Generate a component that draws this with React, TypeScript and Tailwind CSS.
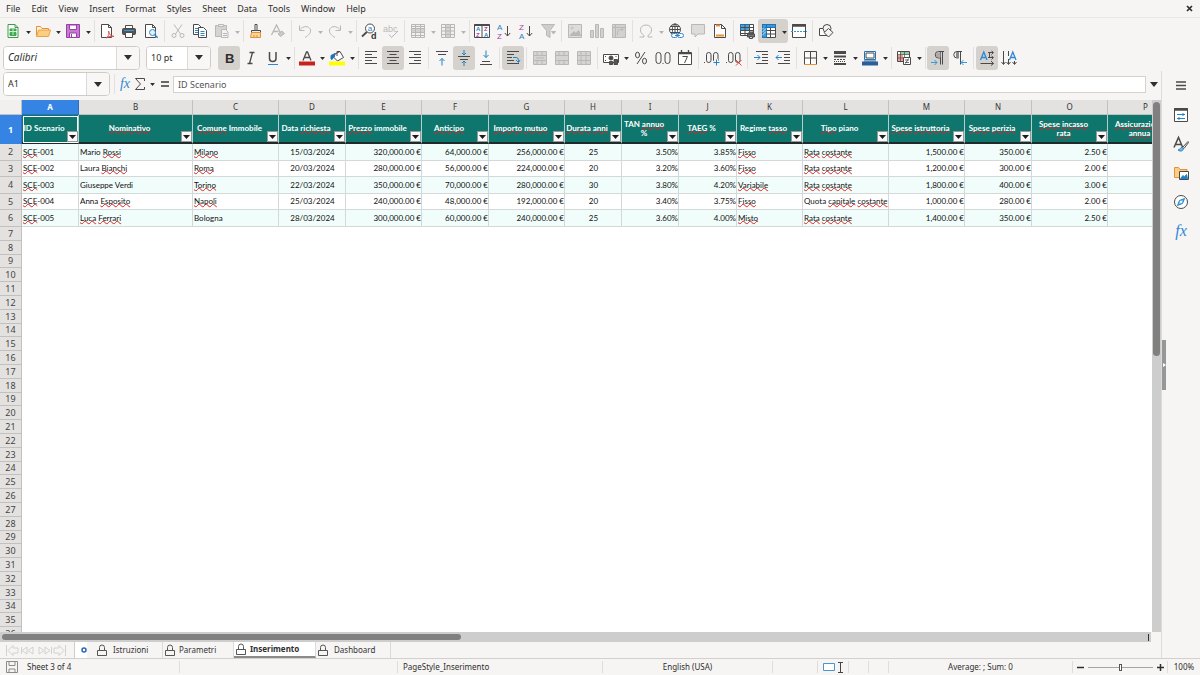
import React from 'react';

type IconProps = { children: React.ReactNode; off?: boolean };

const Icon: React.FC<IconProps> = ({ children, off }) => (
  <svg
    viewBox="0 0 16 16"
    fill="none"
    stroke={off ? '#b9b8b6' : '#4a4a4a'}
    className="h-4 w-4 shrink-0 overflow-visible font-['Liberation_Sans',sans-serif]"
    aria-hidden="true"
  >
    {children}
  </svg>
);

const Triangle: React.FC<{ off?: boolean; big?: boolean }> = ({ off, big }) => (
  <svg viewBox="0 0 8 5" className={big ? 'h-[5px] w-2' : 'h-[3px] w-[5px]'} aria-hidden="true">
    <path d="M0 0h8L4 5z" fill={off ? '#b5b4b2' : '#2e2e2e'} />
  </svg>
);

const Sep: React.FC<{ tight?: boolean }> = ({ tight }) => (
  <div className={`flex h-[22px] shrink-0 justify-center ${tight ? 'w-1' : 'w-[5px]'}`}>
    <div className="w-px bg-[#e3e1df]" />
  </div>
);

type ToolProps = { label: string; children: React.ReactNode; off?: boolean; on?: boolean; menu?: boolean };

const Tool: React.FC<ToolProps> = ({ label, children, off, on, menu }) => (
  <div className={`flex shrink-0 rounded-[3px] ${on ? 'bg-[#d5d1cd]' : ''}`}>
    <button type="button" aria-label={label} disabled={off} className="flex h-6 w-[22px] items-center justify-center">
      <Icon off={off}>{children}</Icon>
    </button>
    {menu && (
      <button type="button" aria-label={`${label} options`} disabled={off} className="flex h-6 w-2 items-center justify-center pt-0.5">
        <Triangle off={off} />
      </button>
    )}
  </div>
);

const Combo: React.FC<{ label: string; value: string; width: string; text: string }> = ({ label, value, width, text }) => (
  <div className={`flex h-6 shrink-0 overflow-hidden rounded-[4px] border border-[#cfcbc7] bg-white ${width}`}>
    <input
      aria-label={label}
      defaultValue={value}
      className={`min-w-0 flex-1 bg-white px-1 text-[#2e2e2e] outline-none ${text}`}
    />
    <button type="button" aria-label={`${label} list`} className="flex w-[23px] items-center justify-center border-l border-[#dcd9d6] bg-[#f8f7f6]">
      <Triangle big />
    </button>
  </div>
);

const menus = ['File', 'Edit', 'View', 'Insert', 'Format', 'Styles', 'Sheet', 'Data', 'Tools', 'Window', 'Help'];

const MenuBar = () => (
  <div className="flex h-[17px] items-center justify-between pr-[7px] pl-1.5">
    <nav className="flex gap-[11px] text-[9px] text-[#2e2e2e]">
      {menus.map((m) => (
        <button type="button" key={m}>{m}</button>
      ))}
    </nav>
    <button type="button" aria-label="Close document">
      <svg viewBox="0 0 7 7" className="h-[7px] w-[7px]" stroke="#2e2e2e" strokeWidth="1.7">
        <path d="M1 1l5 5M6 1L1 6" />
      </svg>
    </button>
  </div>
);

const StandardBar = () => (
  <div className="flex h-[27px] items-center border-t border-[#eae8e6] pl-0.5">
    <Tool label="New" menu>
      <path d="M3 1.500h7l3 3v10H3z" stroke="#3f9a4d" fill="#fff" />
      <path d="M10 1.500v3h3" stroke="#3f9a4d" />
      <path d="M5 6h6v2H5zM5 9.500h6v3H5z" fill="#3faa50" stroke="#3faa50" />
      <path d="M5 8.500h6M8 6v6" stroke="#c9efcf" />
    </Tool>
    <Tool label="Open" menu>
      <path d="M1.500 13V3.500h4l1.500 2h6.500V7" stroke="#e2903a" fill="#fff3dc" />
      <path d="M1.500 13.500l2-6.500h12l-2 6.500z" fill="#fbcf82" stroke="#e9a24a" />
    </Tool>
    <Tool label="Save" menu>
      <path d="M1.500 1.500h13v13h-13z" fill="#c67bd0" stroke="#9a3fa8" />
      <path d="M4.500 2h7v4.500h-7z" fill="#fff" stroke="#9a3fa8" />
      <path d="M4.500 14.500V10h7v4.500z" fill="#fff" stroke="#9a3fa8" />
      <path d="M6.500 11v3" stroke="#9a3fa8" />
    </Tool>
    <Sep tight />
    <Tool label="Export as PDF">
      <path d="M2.500 1.500h7l3 3v10h-10z" fill="#fff" />
      <path d="M9.500 1.500v3h3" />
      <path d="M7 15c3-2 3.500-5 2.500-7 0 3 2 5 5.500 5.500-3-.5-5.500 0-8 1.500z" stroke="#dc4b4b" />
    </Tool>
    <Tool label="Print">
      <path d="M4.500 5V2.500h7V5" fill="#fff" />
      <rect x="1.500" y="5.500" width="13" height="6" rx="1" fill="#555" />
      <path d="M3 7.500h10" stroke="#2e9bd6" />
      <path d="M4.500 9.500h7v5h-7z" fill="#fff" />
    </Tool>
    <Tool label="Print preview">
      <path d="M2.500 1.500h7l3 3v10h-10z" fill="#fff" />
      <path d="M9.500 1.500v3h3" />
      <circle cx="9.500" cy="9.500" r="3" fill="#e3f2fb" stroke="#2f87c6" />
      <path d="M11.700 11.700l3 3" stroke="#2f87c6" strokeWidth="1.500" />
    </Tool>
    <Sep />
    <Tool label="Cut" off>
      <path d="M4 1.500l6.500 9.500M12 1.500L5.500 11" />
      <circle cx="4" cy="12.500" r="2" />
      <circle cx="12" cy="12.500" r="2" />
    </Tool>
    <Tool label="Copy">
      <path d="M1.500 1.500h5l3 3v7h-8z" fill="#fff" />
      <path d="M3 5.500h4M3 7.500h4M3 9.500h3" stroke="#2f87c6" />
      <path d="M6.500 4.500h5l3 3v7h-8z" fill="#fff" />
      <path d="M8.500 8.500h4M8.500 10.500h4M8.500 12.500h4" stroke="#2f87c6" />
    </Tool>
    <Tool label="Paste" off menu>
      <path d="M1.500 2.500h11v11h-11z" fill="#d5d4d2" />
      <path d="M4.500 1.500h5v2h-5z" fill="#eee" />
      <path d="M7.500 6.500h4l2.500 2.500v5.500H7.500z" fill="#f4f3f2" />
      <path d="M9 10.500h4M9 12.500h4" />
    </Tool>
    <Sep tight />
    <Tool label="Clone formatting">
      <path d="M7 1.500h2v6H7z" fill="#fff" />
      <path d="M3.500 7.500h9v2h-9z" fill="#eee" />
      <path d="M3.500 9.500h9v5h-10z" fill="#fbd79e" stroke="#e2903a" />
      <path d="M6 14v-2M9 14v-2" stroke="#e2903a" />
    </Tool>
    <Tool label="Clear formatting" off>
      <path d="M1.500 12L6.500 2l4 8M3.500 8.500h5" strokeWidth="1.300" />
      <path d="M8 11l4-3 2.500 2.500-4 3z" fill="#c9c8c6" />
    </Tool>
    <Sep />
    <Tool label="Undo" off menu>
      <path d="M2.500 2.500v5h5" />
      <path d="M2.500 7C6 2.500 12.500 2.500 13.500 7c.5 3-2 5.500-5.500 7.500" />
    </Tool>
    <Tool label="Redo" off menu>
      <path d="M13.500 2.500v5h-5" />
      <path d="M13.500 7C10 2.500 3.500 2.500 2.500 7c-.5 3 2 5.500 5.500 7.500" />
    </Tool>
    <Sep tight />
    <Tool label="Find and replace">
      <circle cx="9" cy="5.500" r="4.500" fill="#fff" />
      <path d="M5.800 9L1 13.500" strokeWidth="1.800" />
      <text x="6.800" y="8" fontSize="8" fill="#1e83c8" stroke="none">a</text>
      <text x="10" y="15.500" fontSize="9" fontWeight="600" fill="#333" stroke="none">d</text>
    </Tool>
    <Tool label="Spelling" off>
      <text x="0" y="8.500" fontSize="9" fill="#b9b8b6" stroke="none">abc</text>
      <path d="M6 11.500l2.500 3L15 8" />
    </Tool>
    <Sep />
    <Tool label="Row" off menu>
      <path d="M1.500 1.500h13v13h-13z" fill="#f1f0ef" />
      <path d="M1.500 5.500h13v4h-13z" fill="#d2d1cf" />
      <path d="M1.500 3.500h13M1.500 12.500h13M5.500 1.500v13M10.500 1.500v13" />
    </Tool>
    <Tool label="Column" off menu>
      <path d="M1.500 1.500h13v13h-13z" fill="#f1f0ef" />
      <path d="M5.500 1.500h5v13h-5z" fill="#d2d1cf" />
      <path d="M1.500 4.500h13M1.500 8h13M1.500 11.500h13" />
    </Tool>
    <Sep tight />
    <Tool label="Sort">
      <path d="M.5 1.500h15v13H.5zM8 3v11.500" fill="#fff" />
      <path d="M.5 2h15" strokeWidth="2" />
      <g fontSize="6" fontWeight="700" stroke="none">
        <text x="2" y="8" fill="#1e83c8">A</text>
        <text x="2" y="14" fill="#a33ea1">Z</text>
        <text x="10" y="8" fill="#a33ea1">Z</text>
        <text x="10" y="14" fill="#1e83c8">A</text>
      </g>
    </Tool>
    <Tool label="Sort ascending">
      <g fontSize="8" stroke="none">
        <text x="1" y="7" fill="#1e83c8">A</text>
        <text x="1" y="15.500" fill="#a33ea1">Z</text>
      </g>
      <path d="M11.500 3v10M8.800 10l2.700 3 2.700-3" />
    </Tool>
    <Tool label="Sort descending">
      <g fontSize="8" stroke="none">
        <text x="1" y="7" fill="#a33ea1">Z</text>
        <text x="1" y="15.500" fill="#1e83c8">A</text>
      </g>
      <path d="M11.500 3v10M8.800 10l2.700 3 2.700-3" />
    </Tool>
    <Tool label="AutoFilter" off>
      <path d="M1.500 1.500h13L10 7.500v7l-3.500-2v-5z" fill="#cfcecc" />
      <path d="M11.500 8.500h4l-2 2.500z" fill="#b9b8b6" />
    </Tool>
    <Sep />
    <Tool label="Insert image" off>
      <path d="M1.500 1.500h13v13h-13z" fill="#dddcda" />
      <path d="M3 12.500l4-4 2 2 2.500-3 2 5z" fill="#b9b8b6" />
      <circle cx="5" cy="5" r="1" fill="#fff" />
    </Tool>
    <Tool label="Insert chart" off>
      <path d="M1.500 7.500h3v7h-3zM6.500 1.500h3v13h-3zM11.500 5.500h3v9h-3z" fill="#d2d1cf" />
    </Tool>
    <Tool label="Pivot table" off>
      <path d="M1.500 1.500h13v13h-13z" fill="#d2d1cf" />
      <path d="M1.500 4.500h13M4.500 1.500v13" />
      <path d="M6.500 12v-2.500a3 3 0 013-3H12M10.500 5L12 6.500 10.500 8" />
    </Tool>
    <Sep />
    <Tool label="Special character" off menu>
      <path d="M1.500 14H6v-1.500C1 10 1 2 8 2s7 8 2 10.500V14h4.500" />
    </Tool>
    <Tool label="Hyperlink">
      <circle cx="7" cy="6.500" r="5.500" fill="#fff" />
      <path d="M1.500 6.500h11M2.500 3.500h9M2.500 9.500h9M7 1v11" />
      <ellipse cx="7" cy="6.500" rx="2.700" ry="5.500" />
      <rect x="3.500" y="10.500" width="6" height="4" rx="2" fill="#fff" stroke="#2f87d6" />
      <rect x="9.500" y="10.500" width="6" height="4" rx="2" fill="#fff" stroke="#2f87d6" />
      <path d="M7 12.500h5" stroke="#2f87d6" />
    </Tool>
    <Tool label="Comment" off>
      <path d="M1.500 1.500h13v9.500H8l-3 3v-3H1.500z" fill="#dddcda" />
    </Tool>
    <Tool label="Headers and footers">
      <path d="M2.500 1.500h7l4 4v9h-11z" fill="#fff" />
      <path d="M9.500 1.500v4h4" />
      <path d="M4 2.500h4M4 12.500h8" stroke="#e8923a" strokeWidth="2" />
    </Tool>
    <Sep />
    <Tool label="Print area">
      <path d="M1.500 1.500h13v11h-13z" fill="#fff" />
      <path d="M1.500 1.500h9v6h-9z" fill="#4ba3dd" stroke="#1d73b5" />
      <path d="M1.500 4.500h13M1.500 7.500h13M1.500 10.500h13M6 1.500v11M10.500 1.500v11" />
      <path d="M8.500 11h7v3h-7zM10 9h4v2h-4z" fill="#777" />
      <path d="M10.500 13.500h3v2h-3z" fill="#b9e0f7" />
    </Tool>
    <Tool label="Freeze rows and columns" on menu>
      <path d="M1.500 1.500h13v13h-13z" fill="#fff" />
      <path d="M1.500 1.500h13v3h-13zM1.500 1.500h4v13h-4z" fill="#3b97d8" stroke="#1d73b5" />
      <path d="M5.500 7.500h9M5.500 11h9M9.500 4.500v10" />
      <path d="M1 6.500l2-2M1 9.500l4-4M1 12.500l4-4" stroke="#c4e5fa" />
    </Tool>
    <Tool label="Split window">
      <path d="M1.500 1.500h13v13h-13z" fill="#fff" />
      <path d="M1 2.500h14" strokeWidth="2.500" />
      <path d="M0 8.500h16" stroke="#2f9bd6" strokeDasharray="2 1" />
    </Tool>
    <Sep />
    <Tool label="Draw functions">
      <path d="M1.500 5.500h8v7h-8z" fill="#fff" />
      <circle cx="9" cy="5.500" r="4" fill="#f5f4f2" />
      <path d="M10.500 5.500l4.500 4-4.500 4.500L6 9.500z" fill="#f5f4f2" />
    </Tool>
  </div>
);

const FormattingBar = () => (
  <div className="flex h-[27px] items-center pl-[3px]">
    <div className="flex gap-1.5 pr-[7px]">
      <Combo label="Font name" value="Calibri" width="w-[137px]" text="text-[10px] italic" />
      <Combo label="Font size" value="10 pt" width="w-[65px]" text="text-[9px]" />
    </div>
    <Tool label="Bold" on>
      <text x="4" y="12.500" fontSize="13" fontWeight="700" fill="#2e2e2e" stroke="none">B</text>
    </Tool>
    <Tool label="Italic">
      <path d="M6.500 2.500h5M4.500 13.500h5M9.500 2.500l-3 11" strokeWidth="1.300" />
    </Tool>
    <Tool label="Underline" menu>
      <path d="M4.500 2v6.500c0 4 6.500 4 6.500 0V2" strokeWidth="1.500" />
      <path d="M3 14.500h10" stroke="#2f87d6" />
    </Tool>
    <Sep tight />
    <Tool label="Font color" menu>
      <path d="M4 10.500L7.500 2h1l3.500 8.500M5 7.500h6" strokeWidth="1.300" />
      <path d="M0 13.500h16" stroke="#c9211e" strokeWidth="4" />
    </Tool>
    <Tool label="Highlighting color" menu>
      <path d="M6 4l5-2.500 3.500 6-6 3.500L5 7.500z" fill="#fff" />
      <path d="M8 6V1.500h3" />
      <path d="M2 9V5.500l4-2-1 3-2 3z" fill="#1e73b5" stroke="#1e73b5" />
      <path d="M0 13.500h16" stroke="#ffff00" strokeWidth="4" />
    </Tool>
    <Sep tight />
    <Tool label="Align left"><path d="M2 1.500h12M2 4.500h7M2 7.500h12M2 10.500h7M2 13.500h12" /></Tool>
    <Tool label="Center" on><path d="M2 1.500h12M4.500 4.500h7M2 7.500h12M4.500 10.500h7M2 13.500h12" /></Tool>
    <Tool label="Align right"><path d="M2 1.500h12M7 4.500h7M2 7.500h12M7 10.500h7M2 13.500h12" /></Tool>
    <Sep />
    <Tool label="Align top">
      <path d="M2 1.500h12M4 4.500h8" />
      <path d="M8 15.500v-7M5.500 11L8 8.500 10.500 11" stroke="#1e83c8" />
    </Tool>
    <Tool label="Center vertically" on>
      <path d="M2 6.500h12M4 9.500h8" />
      <path d="M8 0v5M6 3l2 2 2-2M8 16v-5M6 13l2-2 2 2" stroke="#1e83c8" />
    </Tool>
    <Tool label="Align bottom">
      <path d="M2 14.500h12M4 11.500h8" />
      <path d="M8 .5v7M5.500 5L8 7.500 10.500 5" stroke="#1e83c8" />
    </Tool>
    <Sep />
    <Tool label="Wrap text" on>
      <path d="M2 1.500h12M2 4.500h7M2 7.500h5M2 10.500h7M2 13.500h12" />
      <path d="M8 7.500h3.500c2 0 2 3 2 4.500M11 10l2.500 2.500L15 10" stroke="#1e83c8" />
    </Tool>
    <Sep />
    <Tool label="Merge and center" off>
      <path d="M1.500 1.500h13v13h-13z" fill="#d5d4d2" />
      <path d="M1.500 5.500h13M1.500 10.500h13M5 1.500v4M10 1.500v4M5 10.500v4M10 10.500v4M4 8h8" />
    </Tool>
    <Tool label="Merge cells" off>
      <path d="M1.500 1.500h13v13h-13z" fill="#d5d4d2" />
      <path d="M1.500 5.500h13M1.500 10.500h13M5 1.500v4M10 1.500v4M5 10.500v4M10 10.500v4" />
    </Tool>
    <Tool label="Unmerge cells" off>
      <path d="M1.500 1.500h13v13h-13z" fill="#d5d4d2" />
      <path d="M1.500 5.500h13M1.500 10.500h13M5 1.500v13M10 1.500v13" />
    </Tool>
    <Sep />
    <Tool label="Currency" menu>
      <path d="M.5 4.500h15v8H.5z" fill="#fff" />
      <circle cx="8" cy="8" r="2" fill="#4a4a4a" />
      <path d="M2 6.500h1M2 10.500h1M12.500 6.500h1" />
      <path d="M6.500 11.500h3v3h-3zM11 9.500h3.500v5H11z" fill="#555" />
    </Tool>
    <Tool label="Percent">
      <ellipse cx="4.500" cy="5" rx="2" ry="2.800" />
      <ellipse cx="11.500" cy="11" rx="2" ry="2.800" />
      <path d="M12 2L4 14" />
    </Tool>
    <Tool label="Number">
      <rect x="1" y="2.500" width="5" height="11" rx="2.500" />
      <path d="M7.500 13.500h1" />
      <rect x="10" y="2.500" width="5" height="11" rx="2.500" />
    </Tool>
    <Tool label="Date">
      <path d="M1.500 2.500h13v12h-13z" fill="#fff" />
      <path d="M1.500 3.500h13M4.500 0v4M11.500 0v4" strokeWidth="1.400" />
      <path d="M5.500 6.500h5l-3 6.500" />
    </Tool>
    <Sep />
    <Tool label="Add decimal place">
      <path d="M0 12.500h1" />
      <rect x="2.500" y="2.500" width="4.500" height="10" rx="2.200" />
      <rect x="9.500" y="2.500" width="4.500" height="10" rx="2.200" />
      <path d="M12.500 9v7M9 12.500h7" stroke="#f5f4f2" strokeWidth="3" />
      <path d="M12.500 9.500v6M9.500 12.500h6" stroke="#1e83c8" />
    </Tool>
    <Tool label="Delete decimal place">
      <path d="M0 12.500h1" />
      <rect x="2.500" y="2.500" width="4.500" height="10" rx="2.200" />
      <rect x="9.500" y="2.500" width="4.500" height="10" rx="2.200" />
      <path d="M10 10l5.500 5.500M15.500 10L10 15.500" stroke="#e0403f" />
    </Tool>
    <Sep />
    <Tool label="Increase indent">
      <path d="M3 1.500h12M9 4.500h6M9 7.500h6M9 10.500h6M3 13.500h12" />
      <path d="M1 7.500h6M4.500 5L7 7.500 4.500 10" stroke="#1e83c8" />
    </Tool>
    <Tool label="Decrease indent">
      <path d="M3 1.500h12M9 4.500h6M9 7.500h6M9 10.500h6M3 13.500h12" />
      <path d="M1 7.500h6M3.500 5L1 7.500 3.500 10" stroke="#1e83c8" />
    </Tool>
    <Sep />
    <Tool label="Borders" menu>
      <path d="M2.500 1.500v13h12M14.500 1.500v13M2.500 1.500h12" stroke="#4a4a4a" fill="#fff" />
      <path d="M8.500 1.500v13M2.500 8h12" />
      <path d="M2 14.500h13" stroke="#e8923a" />
    </Tool>
    <Tool label="Border style" menu>
      <path d="M2 2.500h12" strokeWidth="3" />
      <path d="M2 6.500h12" strokeWidth="2" />
      <path d="M2 9.500h12" strokeDasharray="2 1" />
      <path d="M2 11.500h12" strokeDasharray="1 1" />
      <path d="M2 14h12" strokeWidth="2" />
    </Tool>
    <Tool label="Border color" menu>
      <path d="M2.500 1.500h11v8h-11z" fill="#fff" stroke="#1e73b5" />
      <path d="M4 3h8v5H4z" />
      <path d="M0 13.500h16" stroke="#2a6099" strokeWidth="4" />
      <path d="M2 11h12" stroke="#2a6099" />
    </Tool>
    <Sep tight />
    <Tool label="Conditional formatting" menu>
      <path d="M1.500 1.500h12v10h-12z" fill="#fff" />
      <path d="M4 2h9v2.500H4z" fill="#8ed19b" stroke="none" />
      <path d="M2 5h5v6H2z" fill="#f29b93" stroke="none" />
      <path d="M1.500 4.500h12M1.500 8h12M4.500 1.500v10M8.500 1.500v10" strokeWidth=".7" />
      <path d="M7.500 7.500h7v7h-7z" fill="#fff" />
      <path d="M9 10h4M9 12.500h4M12.500 8.500l-3 5" strokeWidth=".8" />
    </Tool>
    <Sep tight />
    <Tool label="Left-to-right" on>
      <path d="M14 1.500H8.500a3 3 0 000 6.500H10M10.500 1.500v13M12.500 1.500v13" />
      <path d="M8.500 2.500h2v5h-2a2 2 0 010-5z" fill="#aaa" stroke="none" />
      <path d="M1 12.500h6M4.500 10L7 12.500 4.500 15" stroke="#2f9be0" />
    </Tool>
    <Tool label="Right-to-left">
      <path d="M10 1.500H5a3 3 0 000 6.500h1.500V1.500M8.500 1.500v13" />
      <path d="M4 2h3v6H4z" fill="#8a8a8a" stroke="none" />
      <path d="M15 12.500H9M11.500 10L9 12.500l2.500 2.500" stroke="#2f9be0" />
    </Tool>
    <Sep />
    <Tool label="Text direction left to right" on>
      <path d="M1.500 10L4.800 2 8 10M2.800 7.500h4" stroke="#2f87d6" strokeWidth="1.300" />
      <path d="M9 2.500h5M12.500 1L14.500 2.500l-2 2M9 7.500h5M12.500 6l2 1.500-2 2M1.500 13.500h13M12 11l2.500 2.500L12 15.500M10.500 2v6" />
    </Tool>
    <Tool label="Text direction top to bottom">
      <path d="M8.500 10L11.800 2 15 10M9.800 7.500h4" stroke="#2f87d6" strokeWidth="1.300" />
      <path d="M2.500 1v13M.5 12l2 2.500 2-2.500M7.500 1v5M7.500 9v5M5.500 12l2 2.500 2-2.500M13.500 11v3M11.500 12l2 2.500 2-2.500" />
    </Tool>
  </div>
);

const FormulaBar = () => (
  <div className="flex h-[29px] items-center pb-[3px] pl-[3px]">
    <Combo label="Name box" value="A1" width="w-[107px]" text="text-[9px]" />
    <div className="ml-1 h-5 w-px bg-[#e3e1df]" />
    <div className="flex items-center pl-[3px]">
      <button type="button" aria-label="Function wizard" className="w-[14px] font-['Liberation_Serif',serif] text-sm leading-4 text-[#2f87d6] italic">fx</button>
      <button type="button" aria-label="Select function" className="flex w-4 justify-center">
        <Icon><path d="M12.500 5V2.500h-9L8.500 8l-5 5.500h9V11" /></Icon>
      </button>
      <button type="button" aria-label="Function options" className="flex w-2 justify-center"><Triangle /></button>
      <button type="button" aria-label="Formula" className="flex w-[17px] justify-center">
        <svg viewBox="0 0 8 6" className="h-1.5 w-2" stroke="#3a3a3a" strokeWidth="1.500"><path d="M0 1h8M0 5h8" /></svg>
      </button>
    </div>
    <input
      aria-label="Input line"
      defaultValue="ID Scenario"
      className="h-[17px] min-w-0 flex-1 border border-[#d4d1ce] bg-white px-1 text-[9px] text-[#555] outline-none"
    />
    <button type="button" aria-label="Expand formula bar" className="flex w-[15px] justify-center"><Triangle big /></button>
  </div>
);

type Column = { letter: string; title: string; width: string; align: string };

const columns: Column[] = [
  { letter: 'A', title: 'ID Scenario', width: 'w-[57px]', align: 'text-left' },
  { letter: 'B', title: 'Nominativo', width: 'w-[114px]', align: 'text-left' },
  { letter: 'C', title: 'Comune Immobile', width: 'w-[86px]', align: 'text-left' },
  { letter: 'D', title: 'Data richiesta', width: 'w-[67px]', align: 'text-center' },
  { letter: 'E', title: 'Prezzo immobile', width: 'w-[76px]', align: 'text-right' },
  { letter: 'F', title: 'Anticipo', width: 'w-[67px]', align: 'text-right' },
  { letter: 'G', title: 'Importo mutuo', width: 'w-[76px]', align: 'text-right' },
  { letter: 'H', title: 'Durata anni', width: 'w-[57px]', align: 'text-center' },
  { letter: 'I', title: 'TAN annuo\n%', width: 'w-[57px]', align: 'text-right' },
  { letter: 'J', title: 'TAEG %', width: 'w-[58px]', align: 'text-right' },
  { letter: 'K', title: 'Regime tasso', width: 'w-[66px]', align: 'text-left' },
  { letter: 'L', title: 'Tipo piano', width: 'w-[86px]', align: 'text-left' },
  { letter: 'M', title: 'Spese istruttoria', width: 'w-[76px]', align: 'text-right' },
  { letter: 'N', title: 'Spese perizia', width: 'w-[67px]', align: 'text-right' },
  { letter: 'O', title: 'Spese incasso\nrata', width: 'w-[76px]', align: 'text-right' },
  { letter: 'P', title: 'Assicurazione\nannua', width: 'w-[76px]', align: 'text-right' },
];

const rows = [
  ['SCE-001', 'Mario Rossi', 'Milano', '15/03/2024', '320,000.00 €', '64,000.00 €', '256,000.00 €', '25', '3.50%', '3.85%', 'Fisso', 'Rata costante', '1,500.00 €', '350.00 €', '2.50 €', ''],
  ['SCE-002', 'Laura Bianchi', 'Roma', '20/03/2024', '280,000.00 €', '56,000.00 €', '224,000.00 €', '20', '3.20%', '3.60%', 'Fisso', 'Rata costante', '1,200.00 €', '300.00 €', '2.00 €', ''],
  ['SCE-003', 'Giuseppe Verdi', 'Torino', '22/03/2024', '350,000.00 €', '70,000.00 €', '280,000.00 €', '30', '3.80%', '4.20%', 'Variabile', 'Rata costante', '1,800.00 €', '400.00 €', '3.00 €', ''],
  ['SCE-004', 'Anna Esposito', 'Napoli', '25/03/2024', '240,000.00 €', '48,000.00 €', '192,000.00 €', '20', '3.40%', '3.75%', 'Fisso', 'Quota capitale costante', '1,000.00 €', '280.00 €', '2.00 €', ''],
  ['SCE-005', 'Luca Ferrari', 'Bologna', '28/03/2024', '300,000.00 €', '60,000.00 €', '240,000.00 €', '25', '3.60%', '4.00%', 'Misto', 'Rata costante', '1,400.00 €', '350.00 €', '2.50 €', ''],
];

// words the English spell checker does not know
const unknownWords = new Set([
  'SCE', 'Rossi', 'Bianchi', 'Esposito', 'Luca', 'Ferrari', 'Milano', 'Roma', 'Torino', 'Napoli', 'Fisso', 'Variabile',
  'Misto', 'Rata', 'costante', 'capitale', 'Nominativo', 'Comune', 'richiesta', 'Prezzo', 'Anticipo', 'Importo',
  'mutuo', 'Durata', 'anni', 'annuo', 'TAEG', 'tasso', 'Tipo', 'Spese', 'istruttoria', 'perizia', 'incasso', 'rata',
  'Assicurazione', 'annua',
]);

const Spelled: React.FC<{ text: string }> = ({ text }) => (
  <>
    {text.split(/([\s-])/).map((part, i) =>
      unknownWords.has(part) ? (
        <span key={i} className="underline decoration-[#e02020] decoration-wavy decoration-1 [text-decoration-skip-ink:none] underline-offset-[-1px]">{part}</span>
      ) : (
        part
      ),
    )}
  </>
);

const rowHead = "border-r border-b border-[#c3c1bf] bg-[#e4e2e0] p-0 text-center font-['Noto_Sans',sans-serif] text-[9px] leading-3 font-normal text-[#444]";
const emptyRows = Array.from({ length: 40 }, (_, i) => i + 7);

const Grid = () => (
  <table className="w-[1184px] table-fixed border-separate border-spacing-0">
    <thead>
      <tr className="h-[15px]">
        <th className="w-[22px] border-r border-b border-[#c3c1bf] bg-[#f1f0ee] p-0" />
        {columns.map((c) => (
          <th
            key={c.letter}
            scope="col"
            className={`border-r border-b p-0 text-[8px] leading-3 ${c.width} ${
              c.letter === 'A' ? 'border-[#2a6fc4] bg-[#3584e4] font-bold text-white' : 'border-[#c3c1bf] bg-[#e4e2e0] font-normal text-[#333]'
            }`}
          >
            {c.letter}
          </th>
        ))}
      </tr>
    </thead>
    <tbody className="font-['Lato',sans-serif] text-[8px] leading-[10px] text-[#111]">
      <tr className="h-[29px]">
        <th scope="row" className="border-r border-[#2a6fc4] bg-[#3584e4] p-0 font-['Noto_Sans',sans-serif] text-[9px] font-bold text-white">1</th>
        {columns.map((c) => (
          <td
            key={c.letter}
            className={`relative border-r border-b-2 border-r-[#b6cfcc] border-b-[#1f2a2a] bg-[#0f766e] p-0 pr-3 text-center text-[8px] leading-[9px] font-bold whitespace-pre text-white ${
              c.letter === 'A' ? 'outline outline-offset-[-2px] outline-white' : ''
            }`}
          >
            <Spelled text={c.title} />
            <button
              type="button"
              aria-label={`Filter ${c.letter}`}
              className="absolute right-0 bottom-0 flex h-[11px] w-[11px] items-center justify-center border border-[#9a9a9a] bg-[#f8f8f8]"
            >
              <svg viewBox="0 0 7 4" className="h-1 w-[7px]"><path d="M0 0h7L3.500 4z" fill="#1c1c1c" /></svg>
            </button>
          </td>
        ))}
      </tr>
      {rows.map((row, r) => (
        <tr key={row[0]} className={r % 2 ? 'h-4' : 'h-[17px]'}>
          <th scope="row" className={rowHead}>{r + 2}</th>
          {row.map((cell, i) => (
            <td
              key={i}
              className={`border-r border-b border-[#d5d8d8] p-0 pb-px pl-px align-middle whitespace-nowrap ${columns[i].align} ${
                r % 2 ? 'bg-white' : 'bg-[#f0fdfa]'
              }`}
            >
              <Spelled text={cell} />
            </td>
          ))}
        </tr>
      ))}
      {emptyRows.map((n) => (
        <tr key={n} className={n % 5 === 4 ? 'h-[13px]' : 'h-[14px]'}>
          <th scope="row" className={rowHead}>{n}</th>
          <td colSpan={16} className="p-0" />
        </tr>
      ))}
    </tbody>
  </table>
);

const Lock = () => (
  <svg viewBox="0 0 10 12" className="h-3 w-2.5 shrink-0" fill="none" stroke="#555" aria-hidden="true">
    <path d="M.5 6.500h9v5h-9zM2.500 6.500V3.500a2.500 2.500 0 015 0v3" />
  </svg>
);

const sheets = [
  { name: 'Istruzioni', width: 'w-[72px] gap-1.5 pl-1.5' },
  { name: 'Parametri', width: 'w-[71px] gap-1 pl-0.5' },
  { name: 'Inserimento', width: 'w-[82px] gap-1 pl-0.5' },
  { name: 'Dashboard', width: 'w-[75px] gap-1.5 pl-0.5' },
];

const SheetTabs = () => (
  <div className="flex h-4 items-center text-[8px] text-[#333]">
    <button type="button" aria-label="Scroll sheets" className="ml-1.5">
      <svg viewBox="0 0 60 11" className="h-[11px] w-[60px]" fill="none" stroke="#d3d1cf">
        <path d="M.5 0v11M7 .5L2 5.500l5 5V8h5V3H7zM21 2l-5 3.500L21 9zM27 2l-5 3.500L27 9zM33 2l5 3.500L33 9zM39 2l5 3.500L39 9zM53 .5l5 5-5 5V8h-5V3h5zM59.500 0v11M15.500 2v7M45.500 2v7" />
      </svg>
    </button>
    <button type="button" aria-label="Add sheet" className="ml-2 flex h-4 w-[13px] items-center justify-end border-l border-[#cfcdca] bg-white">
      <svg viewBox="0 0 6 6" className="h-1.5 w-1.5" fill="#fff" stroke="#2a66b5" strokeWidth="1.500"><circle cx="3" cy="3" r="2" /></svg>
    </button>
    <div className="ml-1 flex h-4">
      {sheets.map((s) => (
        <button
          type="button"
          key={s.name}
          className={`flex items-center border-r border-[#dcdad8] ${s.width} ${
            s.name === 'Inserimento' ? 'border-b-2 border-b-[#8b8b8b] bg-white font-bold text-[#2e2e2e]' : ''
          }`}
        >
          <Lock />
          {s.name}
        </button>
      ))}
    </div>
  </div>
);

const Sidebar = () => (
  <aside className="flex w-[39px] shrink-0 border-l border-[#dddbd9]">
    <div className="flex w-1 flex-col justify-center">
      <button type="button" aria-label="Hide sidebar" className="flex h-[50px] items-center justify-center bg-[#979797]">
        <svg viewBox="0 0 4 4" className="h-1 w-1"><path d="M1 0l3 2-3 2z" fill="#fff" /></svg>
      </button>
    </div>
    <div className="flex flex-1 flex-col items-center gap-[13px] pt-[7px] pr-1">
      <button type="button" aria-label="Sidebar settings"><Icon><path d="M3 4h10M3 7.500h10M3 11h10" strokeWidth="1.500" /></Icon></button>
      <button type="button" aria-label="Properties">
        <Icon>
          <path d="M1.500 1.500h13v13h-13z" fill="#fff" />
          <path d="M1 2.500h14" strokeWidth="2.500" />
          <path d="M4 7.500h8M4 11.500h8M10 6v3M6 10v3" stroke="#1e83c8" />
        </Icon>
      </button>
      <button type="button" aria-label="Styles">
        <Icon>
          <path d="M1 11.500L5.500 1.500 9.500 11M3 8.500h5.500" strokeWidth="1.500" />
          <path d="M15 5.500L9.500 11.500l1.500 1 4.500-6z" fill="#fff" />
          <path d="M5 14c2 0 2-2.500 4-2.500 2.500 1 1 3.500-1 3.500-1.500 0-2.500-.5-3-1z" fill="#7dbdeb" stroke="#1e83c8" />
        </Icon>
      </button>
      <button type="button" aria-label="Gallery">
        <Icon>
          <path d="M1.500 12.500V2.500h4l1.500 2h7v8z" fill="#fbcf82" stroke="#e2903a" />
          <path d="M6.500 6.500h9v8h-9z" fill="#fff" />
          <path d="M7.500 13.500l2.500-3 1.500 1.500 2-2.500 1 4z" fill="#1e83c8" stroke="#1e83c8" />
        </Icon>
      </button>
      <button type="button" aria-label="Navigator">
        <Icon>
          <circle cx="8" cy="8" r="6.500" fill="#fff" />
          <path d="M11.500 4.500l-2 5-5 2 2-5z" fill="#7dbdeb" stroke="#1e83c8" />
          <circle cx="8" cy="8" r=".8" fill="#fff" stroke="#fff" />
        </Icon>
      </button>
      <button type="button" aria-label="Functions" className="font-['Liberation_Serif',serif] text-base leading-4 text-[#2f87d6] italic">fx</button>
    </div>
  </aside>
);

const field = 'flex h-3 items-center border-r border-[#dfddda]';

const StatusBar = () => (
  <footer className="flex h-[17px] shrink-0 items-center border-t border-[#d2d0cd] text-[8px] text-[#2e2e2e]">
    <div className={`${field} w-[180px] gap-[9px] pl-1.5`}>
      <svg viewBox="0 0 12 12" className="h-3 w-3" fill="none" stroke="#8a8a8a" aria-hidden="true">
        <path d="M.5.5h11v11H.5zM3 .5v4h6v-4M3 11.500V8h6v3.500" />
      </svg>
      Sheet 3 of 4
    </div>
    <div className={`${field} w-[218px]`} />
    <div className={`${field} flex-1 pl-[5px]`}>PageStyle_Inserimento</div>
    <div className={`${field} w-[170px] justify-center`}>English (USA)</div>
    <div className={`${field} w-[45px]`} />
    <div className={`${field} w-[31px] justify-center gap-[3px]`}>
      <svg viewBox="0 0 12 8" className="h-2 w-3" fill="#fff" stroke="#4a94cf"><path d="M.5.5h11v7H.5z" /></svg>
      <svg viewBox="0 0 5 11" className="h-[11px] w-[5px]" fill="none" stroke="#444"><path d="M0 .5h5M0 10.500h5M2.500 0v11" /></svg>
    </div>
    <div className={`${field} w-5`} />
    <div className={`${field} w-5`} />
    <div className={`${field} w-[184px] justify-center`}>Average: ; Sum: 0</div>
    <div className={`${field} w-[95px] justify-center gap-1`}>
      <button type="button" aria-label="Zoom out">
        <svg viewBox="0 0 7 7" className="h-[7px] w-[7px]" stroke="#2e2e2e" strokeWidth="1.500"><path d="M0 3.500h7" /></svg>
      </button>
      <input
        type="range"
        aria-label="Zoom"
        defaultValue={50}
        className="h-2 w-[65px] appearance-none bg-transparent bg-[linear-gradient(#a5a5a5,#a5a5a5)] bg-[length:100%_1px] bg-center bg-no-repeat [&::-webkit-slider-thumb]:h-[7px] [&::-webkit-slider-thumb]:w-[3px] [&::-webkit-slider-thumb]:appearance-none [&::-webkit-slider-thumb]:border [&::-webkit-slider-thumb]:border-[#555] [&::-webkit-slider-thumb]:bg-white"
      />
      <button type="button" aria-label="Zoom in">
        <svg viewBox="0 0 7 7" className="h-[7px] w-[7px]" stroke="#2e2e2e" strokeWidth="1.500"><path d="M0 3.500h7M3.500 0v7" /></svg>
      </button>
    </div>
    <div className="w-8 text-center">100%</div>
  </footer>
);

const App: React.FC = () => {
  return (
    <div className="flex h-screen flex-col overflow-hidden bg-[#f6f5f3] font-['Noto_Sans',sans-serif]">
      <MenuBar />
      <StandardBar />
      <FormattingBar />
      <main className="flex min-h-0 flex-1">
        <div className="flex min-w-0 flex-1 flex-col">
          <FormulaBar />
          <div className="flex min-h-0 flex-1">
            <div className="min-w-0 flex-1 overflow-hidden bg-white">
              <Grid />
            </div>
            {/* Vertical scrollbar */}
            <div className="w-[9px] bg-[#cdcdcd] px-px pt-0.5">
              <div className="h-[48%] rounded-full bg-[#808080]" />
            </div>
          </div>
          {/* Horizontal scrollbar */}
          <div className="flex h-2.5 items-center pr-2.5">
            <div className="flex h-2.5 flex-1 items-center justify-between bg-[#cdcdcd] px-0.5">
              <div className="h-1.5 w-[40%] rounded-full bg-[#808080]" />
              <div className="h-[7px] w-px bg-[#333]" />
            </div>
          </div>
          <SheetTabs />
        </div>
        <Sidebar />
      </main>
      <StatusBar />
    </div>
  );
};

export default App;
